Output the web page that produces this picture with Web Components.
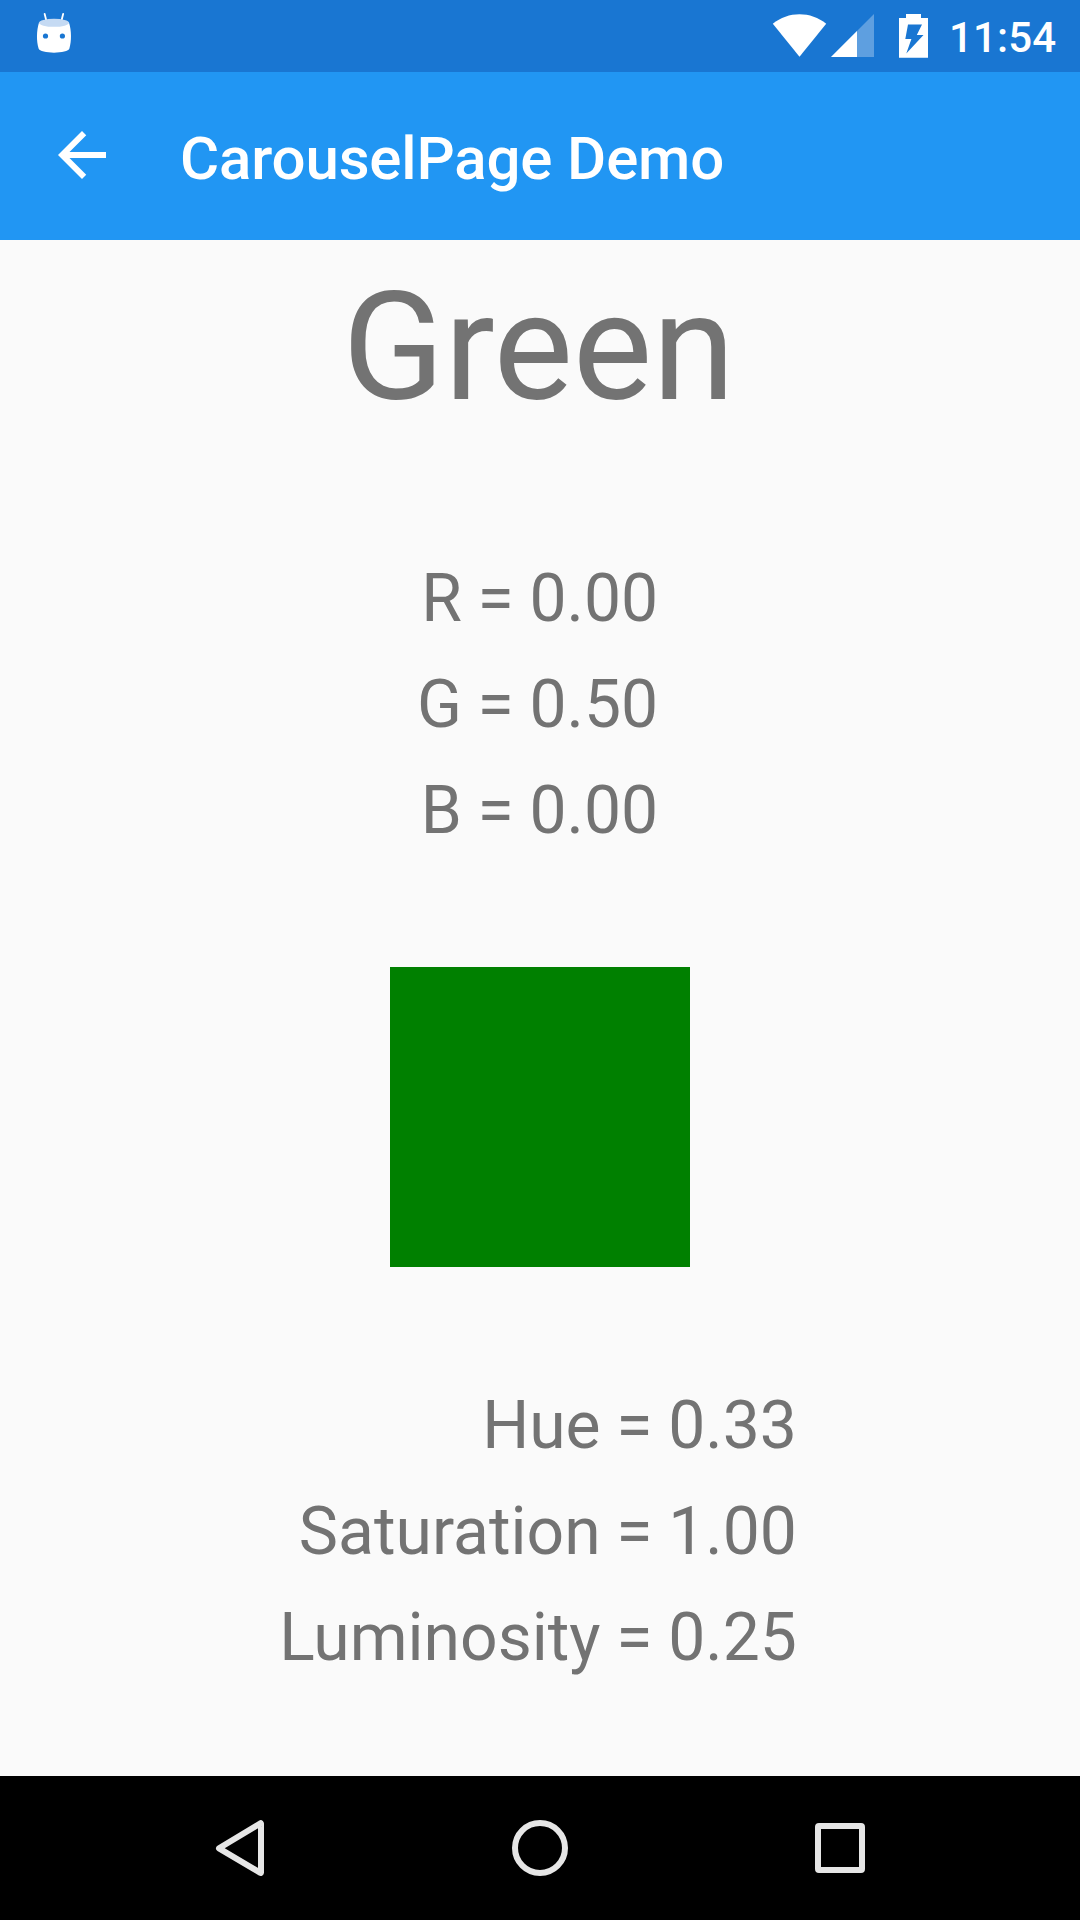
<!DOCTYPE html>
<html lang="en">
<head>
<meta charset="utf-8">
<title>CarouselPage Demo</title>
<style>
html, body { margin: 0; height: 100%; }
body { font-family: Roboto, "Noto Sans", sans-serif; background: #fafafa; }
</style>
</head>
<body>
<phone-screen>
  <status-bar slot="status">11:54</status-bar>
  <app-bar slot="bar">CarouselPage Demo</app-bar>
  <color-page color="#008000">
    <span slot="name">Green</span>
    <value-list slot="rgb">
      <value-row>R = 0.00</value-row>
      <value-row>G = 0.50</value-row>
      <value-row>B = 0.00</value-row>
    </value-list>
    <value-list slot="hsl">
      <value-row>Hue = 0.33</value-row>
      <value-row>Saturation = 1.00</value-row>
      <value-row>Luminosity = 0.25</value-row>
    </value-list>
  </color-page>
  <nav-bar slot="nav"></nav-bar>
</phone-screen>
<script>
function define(name, html, setup) {
  customElements.define(name, class extends HTMLElement {
    constructor() {
      super();
      this.attachShadow({ mode: 'open' }).innerHTML = html;
    }
    connectedCallback() { if (setup) setup(this); }
  });
}

define('phone-screen', `
<style>
:host { display: flex; flex-direction: column; width: 1080px; height: 1920px; overflow: hidden; background: #fafafa; }
main { flex: 1; min-height: 0; }
</style>
<slot name="status"></slot><slot name="bar"></slot><main><slot></slot></main><slot name="nav"></slot>`);

define('status-bar', `
<style>
:host { display: flex; align-items: flex-start; box-sizing: border-box; height: 72px; padding: 0 24px 0 36px; background: #1976d2; color: #fff; }
svg { display: block; flex: none; }
.space { flex: 1; }
.clock { width: 107px; font-size: 42px; font-weight: 500; line-height: 49px; letter-spacing: .12px; margin: 13px 0 0 19px; white-space: nowrap; }
</style>
<svg width="36" height="72" viewBox="36 0 36 72">
  <path d="M44.6 13.8l2 8M63.2 13.8l-2 8" stroke="#fff" stroke-width="1.8" stroke-linecap="round"/>
  <path d="M39 22.5C36.4 31 36.4 41 38.6 48.5C40 54 68 54 69.4 48.5C71.6 41 71.6 31 69 22.5Z" fill="#fff"/>
  <ellipse cx="54" cy="22.8" rx="15" ry="4" fill="#c5daf3"/>
  <circle cx="45.5" cy="36" r="2.6" fill="#1976d2"/><circle cx="62.4" cy="36" r="2.6" fill="#1976d2"/>
</svg>
<span class="space"></span>
<svg width="160" height="72" viewBox="770 0 160 72">
  <path d="M799.5 56.8L772.8 23.8C788 11 811 11 826.2 23.8Z" fill="#fff"/>
  <path d="M831 57L874 14V57Z" fill="#5e9fe0"/>
  <path d="M831 57L857 31V57Z" fill="#fff"/>
  <path fill="#fff" d="M906 14h15v4h7v39.7h-29V18h7z"/>
  <path d="M908 24.5H922L916.8 35H923.5L906.3 53.5L911.4 39H905.3Z" fill="#1976d2"/>
</svg>
<span class="clock"><slot></slot></span>`);

define('app-bar', `
<style>
:host { display: flex; align-items: flex-start; box-sizing: border-box; height: 168px; padding-left: 46px; background: #2196f3; color: #fff; }
svg { flex: none; margin-top: 47px; }
.title { font-size: 60px; font-weight: 500; line-height: 70px; letter-spacing: -.15px; margin: 52px 0 0 62px; white-space: nowrap; }
</style>
<svg width="72" height="72" viewBox="0 0 24 24" fill="#fff"><path d="M20 11H7.83l5.59-5.59L12 4l-8 8 8 8 1.41-1.41L7.83 13H20z"/></svg>
<span class="title"><slot></slot></span>`);

define('color-page', `
<style>
:host { display: flex; flex-direction: column; align-items: center; padding-top: 20px; color: #737373; }
.name { font-size: 150px; line-height: 176px; letter-spacing: -.2px; margin-right: 3px; white-space: nowrap; }
.rgb { margin: 110px 5px 0 0; }
.box { width: 300px; height: 300px; margin-top: 103px; }
.hsl { margin: 106px 4px 0 0; }
</style>
<div class="name"><slot name="name"></slot></div>
<div class="rgb"><slot name="rgb"></slot></div>
<div class="box"></div>
<div class="hsl"><slot name="hsl"></slot></div>`,
  el => { el.shadowRoot.querySelector('.box').style.background = el.getAttribute('color'); });

define('value-list', `
<style>:host { display: flex; flex-direction: column; align-items: flex-end; }</style>
<slot></slot>`);

define('value-row', `
<style>:host { display: block; font-size: 66px; line-height: 106px; word-spacing: -.7px; white-space: nowrap; }</style>
<slot></slot>`);

define('nav-bar', `
<style>
:host { display: flex; justify-content: center; align-items: center; gap: 228px; height: 144px; background: #000; }
svg { flex: none; fill: none; stroke: #e6e6e6; stroke-width: 6; stroke-linejoin: round; }
</style>
<svg width="72" height="72" viewBox="204 1812 72 72"><path d="M219 1848.3L260.5 1823.3C260.9 1823 261 1823.2 261 1823.6V1872.6C261 1873 260.8 1873.2 260.4 1872.9Z"/></svg>
<svg width="72" height="72"><circle cx="36" cy="36" r="25"/></svg>
<svg width="72" height="72"><rect x="14" y="14" width="44" height="44" rx="1"/></svg>`);
</script>
</body>
</html>
